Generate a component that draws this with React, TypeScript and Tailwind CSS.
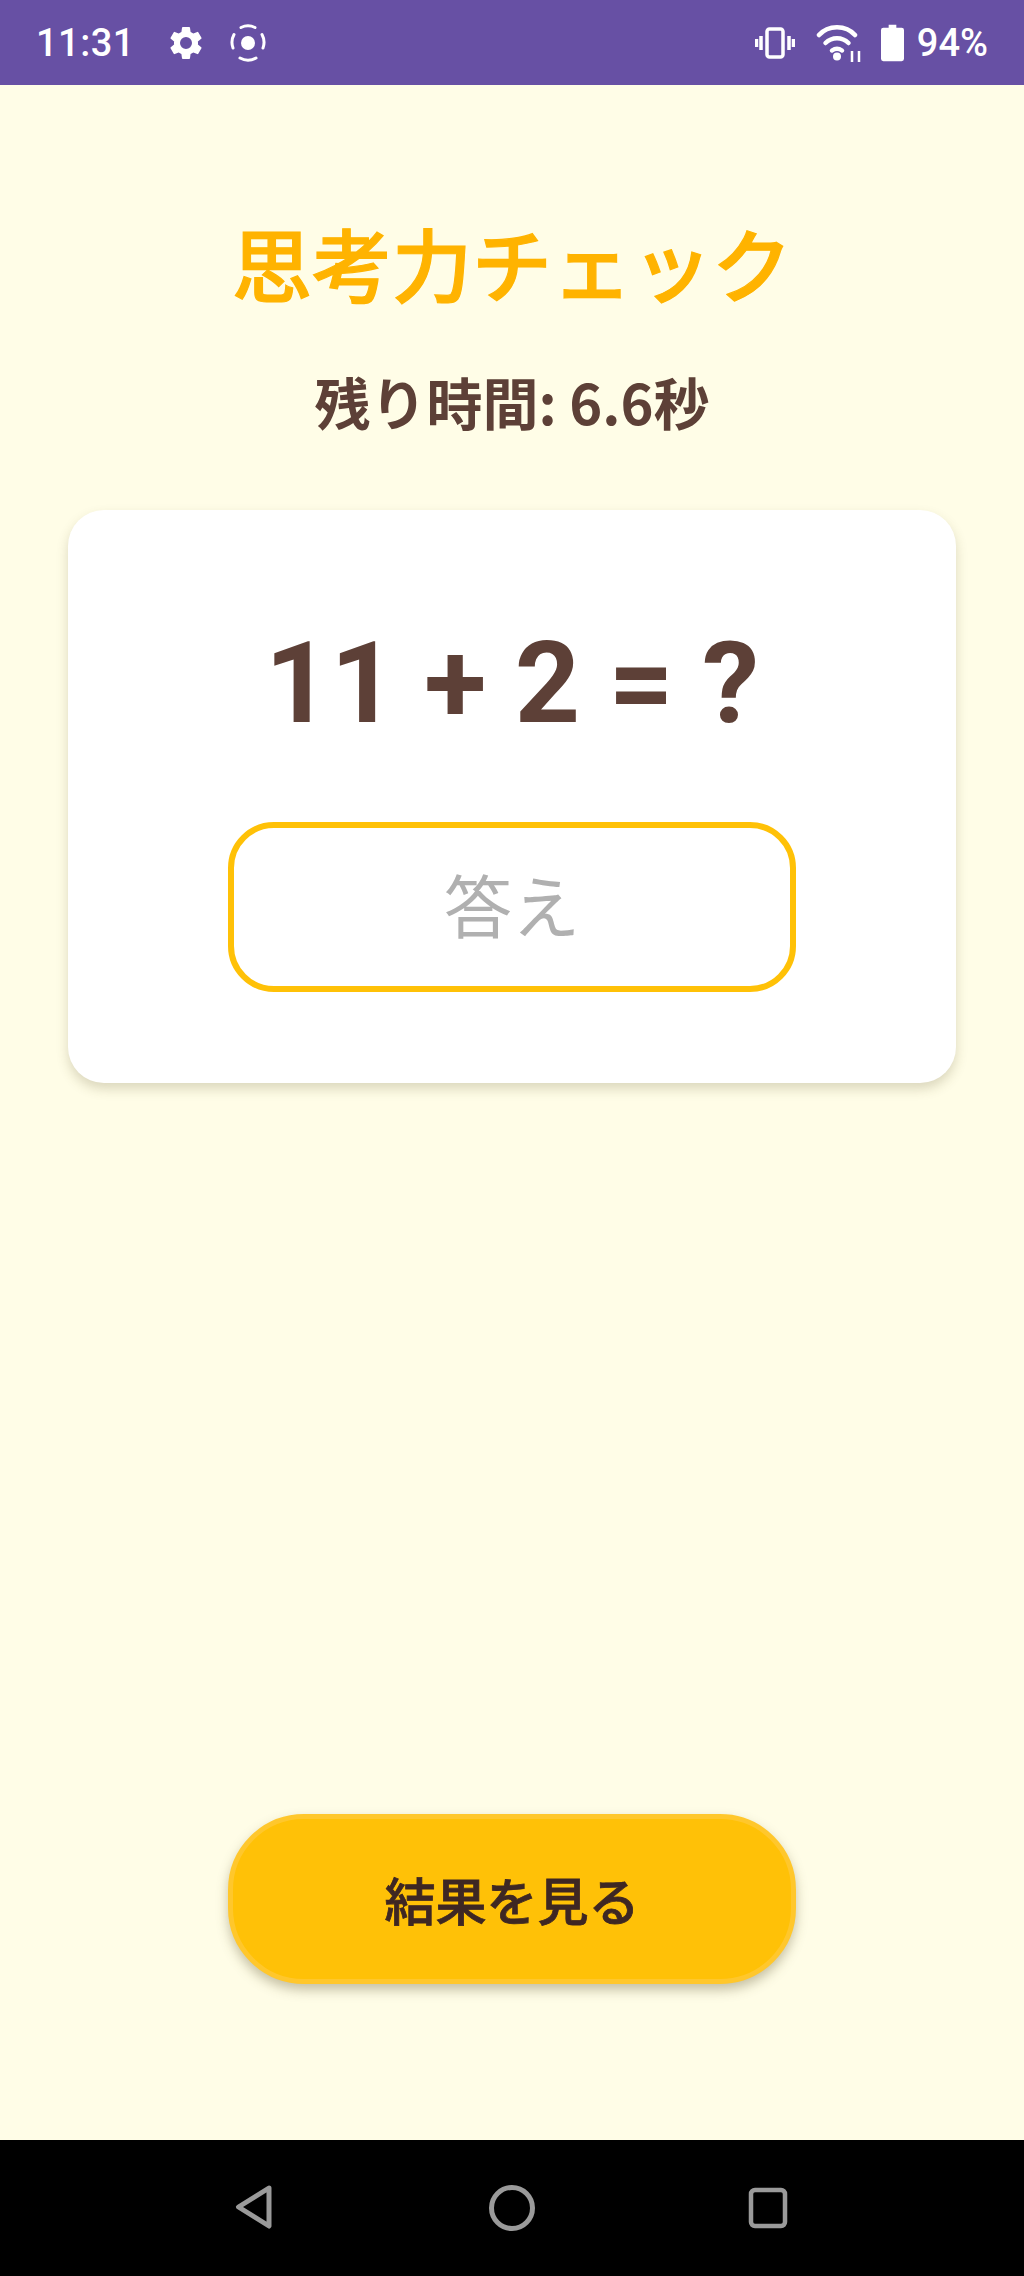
const jp = "font-['Noto_Sans_CJK_JP','Noto_Sans',sans-serif]";

function StatusBar() {
  return (
    <div className="h-[85px] bg-[#6750a4] flex items-center justify-between pl-[36px] pr-[36px] text-white font-['Roboto',sans-serif] font-medium text-[38px] leading-none">
      <div className="flex items-center">
        <span className="tracking-[0.5px]">11:31</span>
        <svg className="ml-[31px]" width="40" height="40" viewBox="0 0 24 24" fill="#fff">
          <path d="M19.14 12.94c.04-.3.06-.61.06-.94 0-.32-.02-.64-.07-.94l2.03-1.58a.49.49 0 0 0 .12-.61l-1.92-3.32a.49.49 0 0 0-.59-.22l-2.39.96c-.5-.38-1.03-.7-1.62-.94l-.36-2.54a.48.48 0 0 0-.48-.41h-3.84c-.24 0-.43.17-.47.41l-.36 2.54c-.59.24-1.13.57-1.62.94l-2.39-.96a.48.48 0 0 0-.59.22L2.74 8.87c-.12.21-.08.47.12.61l2.03 1.58c-.05.3-.09.63-.09.94s.02.64.07.94l-2.03 1.58a.49.49 0 0 0-.12.61l1.92 3.32c.12.22.37.29.59.22l2.39-.96c.5.38 1.03.7 1.62.94l.36 2.54c.05.24.24.41.48.41h3.84c.24 0 .44-.17.47-.41l.36-2.54c.59-.24 1.13-.56 1.62-.94l2.39.96c.22.08.47 0 .59-.22l1.92-3.32c.12-.22.07-.47-.12-.61l-2.01-1.58zM12 15.6A3.6 3.6 0 1 1 12 8.4a3.6 3.6 0 0 1 0 7.2z" />
        </svg>
        <svg className="ml-[23px]" width="38" height="38" viewBox="0 0 38 38" fill="none" stroke="#fff" strokeWidth="3" strokeLinecap="round">
          <circle cx="19" cy="19" r="7" fill="#fff" stroke="none" />
          <path d="M12 3.500A16.500 16.500 0 0 1 26 3.500" />
          <path d="M5 10.500A16.500 16.500 0 0 0 4 24" />
          <path d="M33 10.500A16.500 16.500 0 0 1 34 24" />
          <path d="M11 34A16.500 16.500 0 0 0 27 34" />
        </svg>
      </div>
      <div className="flex items-center">
        <svg width="40" height="32" viewBox="0 0 40 32" fill="none" stroke="#fff" strokeWidth="3.500">
          <rect x="12" y="2" width="16" height="28" rx="2.500" />
          <path d="M6 9v14M1.500 12v8M34 9v14M38.500 12v8" />
        </svg>
        <svg className="ml-[21px]" width="45" height="40" viewBox="0 0 45 40" fill="none" stroke="#fff" strokeWidth="4.500" strokeLinecap="round">
          <path d="M3 12C12 1.500 30 1.500 39 12" />
          <path d="M9.500 20c6.500-6.500 16.500-6.500 23 0" />
          <path d="M16 27.500c3-2 7-2 10 0" />
          <circle cx="21" cy="33.500" r="4" fill="#fff" stroke="none" />
          <path d="M36 28v11M43 28v11" strokeWidth="2.500" strokeLinecap="butt" />
        </svg>
        <svg className="ml-[20px]" width="23" height="38" viewBox="0 0 24 38" fill="#fff">
          <path d="M8 0h8v3h5.500A2.500 2.500 0 0 1 24 5.500v30a2.500 2.500 0 0 1-2.500 2.500h-19A2.500 2.500 0 0 1 0 35.500v-30A2.500 2.500 0 0 1 2.500 3H8z" />
        </svg>
        <span className="ml-[13px]">94%</span>
      </div>
    </div>
  );
}

function NavBar() {
  return (
    <div className="h-[136px] bg-black relative">
      <svg className="absolute left-[234px] top-[44px]" width="40" height="46" viewBox="0 0 40 46" fill="none" stroke="#9a9a9a" strokeWidth="5" strokeLinejoin="round">
        <path d="M35 4L4.500 23 35 42z" />
      </svg>
      <svg className="absolute left-[488px] top-[44px]" width="48" height="48" viewBox="0 0 48 48" fill="none" stroke="#9a9a9a" strokeWidth="5">
        <circle cx="24" cy="24" r="20.500" />
      </svg>
      <svg className="absolute left-[748px] top-[47px]" width="40" height="42" viewBox="0 0 40 42" fill="none" stroke="#9a9a9a" strokeWidth="4.500">
        <rect x="3" y="3" width="34" height="36" rx="4" />
      </svg>
    </div>
  );
}

export default function App() {
  return (
    <div className={`w-[1024px] h-[2276px] flex flex-col bg-[#fffde7] ${jp}`}>
      <StatusBar />
      <main className="flex-1 flex flex-col items-center">
        <h1 className="mt-[120px] text-[80px] leading-[112px] font-medium text-[#ffb300] [-webkit-text-stroke:1.2px_#ffb300]">思考力チェック</h1>
        <p className="mt-[49px] text-[56px] leading-[70px] font-bold text-[#5d4037]">残り時間: 6.6秒</p>
        <div className="mt-[74px] w-[888px] h-[573px] rounded-[36px] bg-white flex flex-col items-center shadow-[0_6px_12px_rgba(90,80,40,0.22)]">
          <div className="mt-[107px] font-['Roboto',sans-serif] font-bold text-[114px] leading-[132px] text-[#5d4037]">11 + 2 = ?</div>
          <div className="mt-[73px] pb-[6px] w-[568px] h-[170px] rounded-[46px] border-[6px] border-[#ffc107] flex items-center justify-center text-[68px] text-[#b0b0b0]">答え</div>
        </div>
        <div className="flex-1" />
        <button className="mb-[156px] w-[568px] h-[170px] rounded-[76px] bg-[#ffc107] border-[5px] border-[#ffc72c] text-[#3e2723] text-[51px] font-medium [-webkit-text-stroke:0.8px_#3e2723] flex items-center justify-center shadow-[0_6px_12px_rgba(90,80,40,0.35)]">結果を見る</button>
      </main>
      <NavBar />
    </div>
  );
}
